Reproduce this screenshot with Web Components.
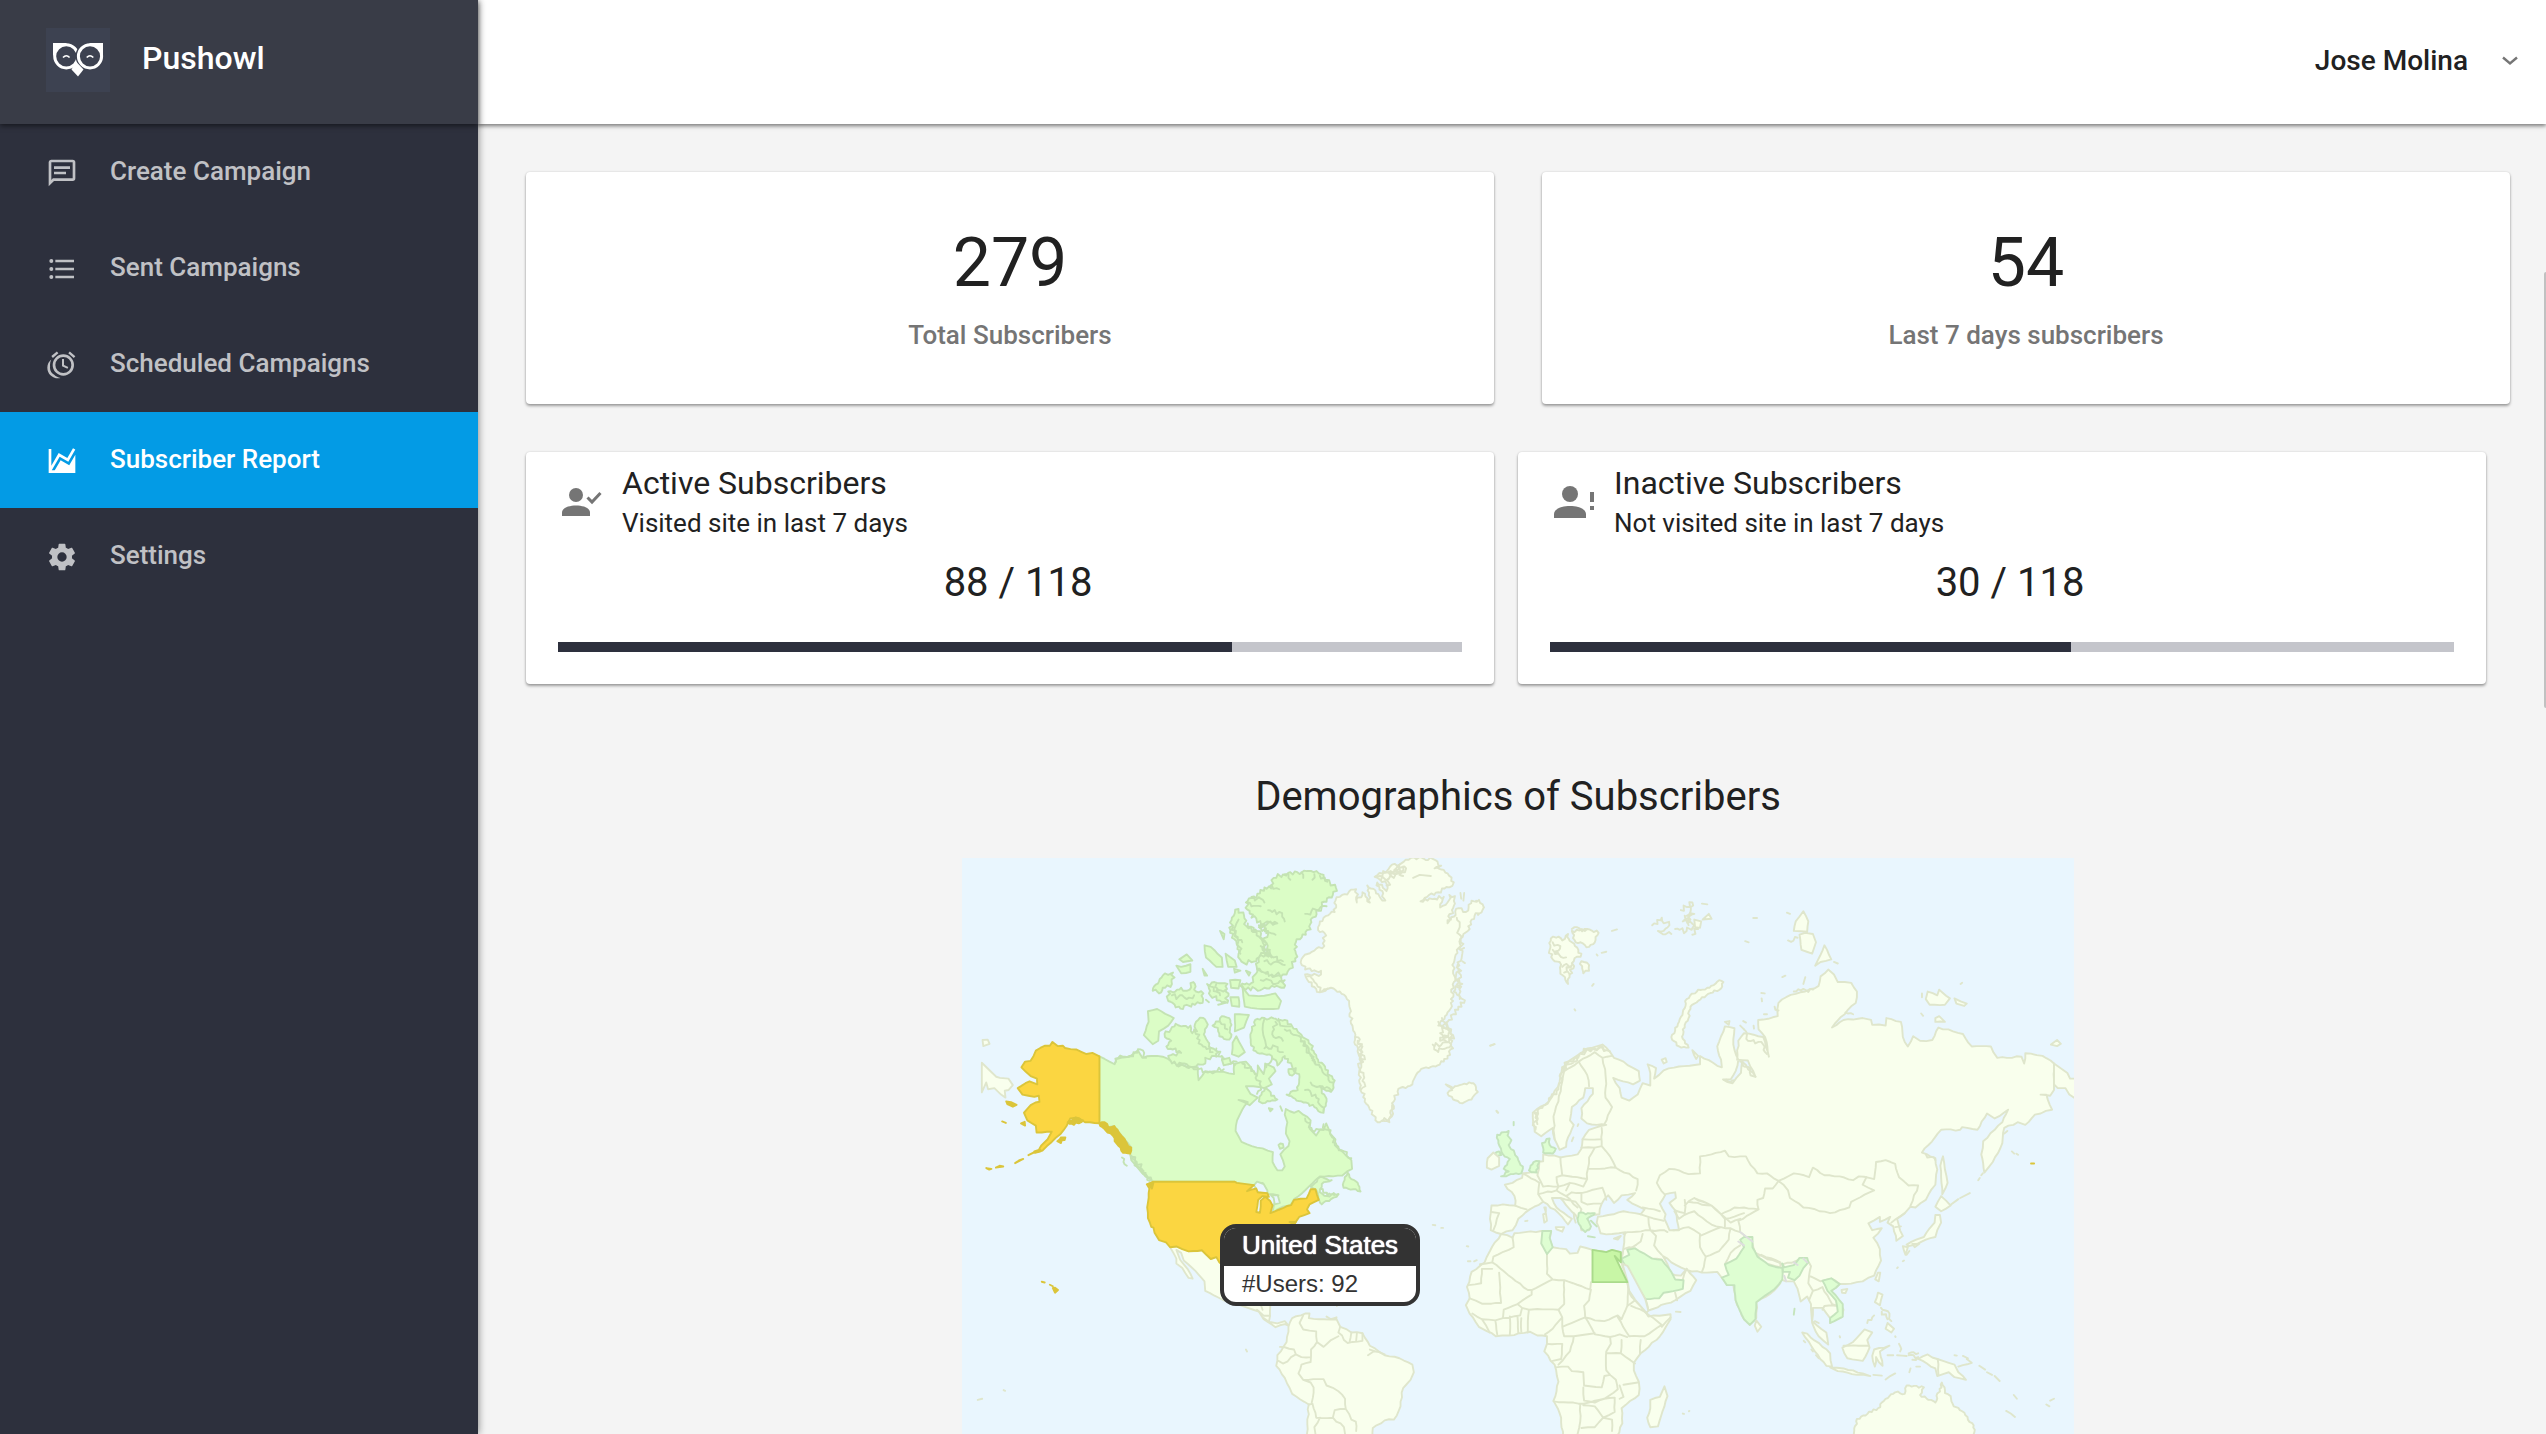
<!DOCTYPE html>
<html lang="en">
<head>
<meta charset="utf-8">
<title>Pushowl – Subscriber Report</title>
<style>
  body { margin: 0; font-family: Roboto, "Liberation Sans", sans-serif; color: #212121; background: #f4f4f4; }
</style>
</head>
<body>
<push-app>
  <push-sidebar slot="sidebar">
    <push-nav-item icon="message">Create Campaign</push-nav-item>
    <push-nav-item icon="list">Sent Campaigns</push-nav-item>
    <push-nav-item icon="alarm">Scheduled Campaigns</push-nav-item>
    <push-nav-item icon="chart" active>Subscriber Report</push-nav-item>
    <push-nav-item icon="gear">Settings</push-nav-item>
  </push-sidebar>
  <push-topbar slot="topbar">Jose Molina</push-topbar>
  <push-row>
    <push-stat value="279">Total Subscribers</push-stat>
    <push-stat value="54">Last 7 days subscribers</push-stat>
  </push-row>
  <push-row compact>
    <push-activity icon="user-check" heading="Active Subscribers" count="88 / 118" progress="746">Visited site in last 7 days</push-activity>
    <push-activity icon="user-alert" heading="Inactive Subscribers" count="30 / 118" progress="576">Not visited site in last 7 days</push-activity>
  </push-row>
  <push-demographics>Demographics of Subscribers</push-demographics>
</push-app>

<script>
const ICONS = {
  message: '<path d="M20,2A2,2 0 0,1 22,4V16A2,2 0 0,1 20,18H6L2,22V4C2,2.9 2.9,2 4,2H20M4,4V17.17L5.17,16H20V4H4M6,7H18V9H6V7M6,11H15V13H6V11Z"/>',
  list: '<path d="M7,5H21V7H7V5M7,13V11H21V13H7M4,4.5A1.5,1.5 0 0,1 5.5,6A1.5,1.5 0 0,1 4,7.5A1.5,1.5 0 0,1 2.5,6A1.5,1.5 0 0,1 4,4.5M4,10.5A1.5,1.5 0 0,1 5.5,12A1.5,1.5 0 0,1 4,13.5A1.5,1.5 0 0,1 2.5,12A1.5,1.5 0 0,1 4,10.5M7,19V17H21V19H7M4,16.5A1.5,1.5 0 0,1 5.5,18A1.5,1.5 0 0,1 4,19.5A1.5,1.5 0 0,1 2.5,18A1.5,1.5 0 0,1 4,16.5Z"/>',
  alarm: '<path d="M9.29,3.25L5.16,6.72L4,5.34L8.14,1.87L9.29,3.25M22,5.35L20.84,6.73L16.7,3.25L17.86,1.87L22,5.35M13,4A8,8 0 0,1 21,12A8,8 0 0,1 13,20A8,8 0 0,1 5,12A8,8 0 0,1 13,4M13,6A6,6 0 0,0 7,12A6,6 0 0,0 13,18A6,6 0 0,0 19,12A6,6 0 0,0 13,6M12,7.5H13.5V12.03L16.72,13.5L16.1,14.86L12,13V7.5M1,14C1,11.5 2.13,9.3 3.91,7.83C3.33,9.1 3,10.5 3,12L3.06,13.13L3,14C3,16.28 4.27,18.26 6.14,19.28C7.44,20.5 9.07,21.39 10.89,21.78C10.28,21.92 9.65,22 9,22A8,8 0 0,1 1,14Z"/>',
  chart: '<path d="M17.45,15.18L22,7.31V19L22,21H2V3H4V15.54L9.5,6L16,9.78L20.24,2.45L21.97,3.45L16.74,12.5L10.23,8.75L4.31,19H6.57L10.96,11.44L17.45,15.18Z"/>',
  gear: '<path d="M12,15.5A3.5,3.5 0 0,1 8.5,12A3.5,3.5 0 0,1 12,8.5A3.5,3.5 0 0,1 15.5,12A3.5,3.5 0 0,1 12,15.5M19.43,12.97C19.47,12.65 19.5,12.33 19.5,12C19.5,11.67 19.47,11.34 19.43,11L21.54,9.37C21.73,9.22 21.78,8.95 21.66,8.73L19.66,5.27C19.54,5.05 19.27,4.96 19.05,5.05L16.56,6.05C16.04,5.66 15.5,5.32 14.87,5.07L14.5,2.42C14.46,2.18 14.25,2 14,2H10C9.75,2 9.54,2.18 9.5,2.42L9.13,5.07C8.5,5.32 7.96,5.66 7.44,6.05L4.95,5.05C4.73,4.96 4.46,5.05 4.34,5.27L2.34,8.73C2.21,8.95 2.27,9.22 2.46,9.37L4.57,11C4.53,11.34 4.5,11.67 4.5,12C4.5,12.33 4.53,12.65 4.57,12.97L2.46,14.63C2.27,14.78 2.21,15.05 2.34,15.27L4.34,18.73C4.46,18.95 4.73,19.03 4.95,18.95L7.44,17.94C7.96,18.34 8.5,18.68 9.13,18.93L9.5,21.58C9.54,21.82 9.75,22 10,22H14C14.25,22 14.46,21.82 14.5,21.58L14.87,18.93C15.5,18.67 16.04,18.34 16.56,17.94L19.05,18.95C19.27,19.03 19.54,18.95 19.66,18.73L21.66,15.27C21.78,15.05 21.73,14.78 21.54,14.63L19.43,12.97Z"/>',
  'user-check': '<circle cx="14" cy="11" r="7"/><path d="M0 32v-3.5c0-4.7 7-7 14-7s14 2.3 14 7V32z"/><path d="M25.5 13.5l4.5 4.5 8.5-9" fill="none" stroke="currentColor" stroke-width="3"/>',
  'user-alert': '<circle cx="16" cy="10" r="8"/><path d="M0 34v-4c0-5.3 8-8 16-8s16 2.7 16 8v4zM36 8h4v10h-4zM36 22h4v4h-4z"/>'
};

const define = (name, render) => customElements.define(name, class extends HTMLElement {
  connectedCallback() {
    if (this.shadowRoot) return;
    this.attachShadow({ mode: 'open' }).innerHTML = render(this);
  }
});

define('push-app', () => `
<style>
  :host { display: flex; height: 100vh; overflow: hidden; position: relative; }
  .page { flex: 1; min-width: 0; display: flex; flex-direction: column; }
  main { flex: 1; min-height: 0; overflow: hidden; padding: 48px 36px 0 48px; display: flex; flex-direction: column; gap: 48px; }
  .thumb { position: absolute; right: 0; top: 19%; width: 2px; height: 436px; background: #c1c1c1; border-radius: 2px 0 0 2px; }
</style>
<slot name="sidebar"></slot>
<div class="page"><slot name="topbar"></slot><main><slot></slot></main></div>
<div class="thumb"></div>`);

define('push-sidebar', () => `
<style>
  :host { display: block; width: 478px; flex: none; background: #2d303d; box-shadow: 0 0 8px rgba(0,0,0,.5); position: relative; z-index: 2; }
  header { box-sizing: border-box; height: 124px; padding: 28px 46px 32px; display: flex; align-items: center; gap: 32px; background: #393c47; color: #fff; box-shadow: 0 2px 5px rgba(0,0,0,.5); position: relative; }
  h1 { margin: 0; padding-bottom: 4px; font-size: 32px; line-height: 40px; font-weight: 500; }
  svg { display: block; }
  nav { display: flex; flex-direction: column; }
</style>
<header>
  <svg width="64" height="64" viewBox="0 0 64 64" aria-hidden="true">
    <rect width="64" height="64" fill="#3d4251"/>
    <path d="M7 15H21L10 24L7 28ZM57 15H43L54 24L57 28Z" fill="#fff"/>
    <circle cx="20.3" cy="28.3" r="11.6" fill="#3d4251" stroke="#fff" stroke-width="3"/>
    <circle cx="44" cy="28.3" r="14.4" fill="#3d4251"/>
    <path d="M57 15H43L54 24L57 28Z" fill="#fff"/>
    <path d="M25.5 41.5l4.5-8 7.5 8L32 48.5z" fill="#fff"/>
    <circle cx="44" cy="28.3" r="11.6" fill="#3d4251" stroke="#fff" stroke-width="3"/>
    <path d="M17 29.5q3.3-3.5 6.6 0M40.7 29.5q3.3-3.5 6.6 0" fill="none" stroke="#fff" stroke-width="1.6"/>
  </svg>
  <h1>Pushowl</h1>
</header>
<nav><slot></slot></nav>`);

define('push-nav-item', el => `
<style>
  :host { display: block; }
  a { display: flex; align-items: center; gap: 32px; height: 96px; padding: 0 46px 2px; color: #c0c1c5; text-decoration: none; font-size: 26px; line-height: 32px; font-weight: 500; box-sizing: border-box; }
  :host([active]) a { background: #039be5; color: #fff; }
  svg { width: 32px; height: 32px; fill: currentColor; flex: none; margin-top: 4px; }
</style>
<a href="#"><svg viewBox="0 0 24 24" aria-hidden="true">${ICONS[el.getAttribute('icon')]}</svg><span><slot></slot></span></a>`);

define('push-topbar', () => `
<style>
  :host { box-sizing: border-box; display: flex; flex: none; height: 124px; align-items: center; justify-content: flex-end; padding: 0 28px 2px 28px; background: #fff; box-shadow: 0 2px 4px rgba(0,0,0,.5); position: relative; z-index: 1; }
  button { display: flex; align-items: center; gap: 34px; padding: 0; border: 0; background: none; color: #212121; font: 500 28px/36px Roboto, "Liberation Sans", sans-serif; }
</style>
<button type="button"><slot></slot><svg width="16" height="10" viewBox="0 0 16 10" fill="none" stroke="#757575" stroke-width="2.4" aria-hidden="true"><path d="M1 1.5l7 6 7-6"/></svg></button>`);

define('push-row', () => `
<style>
  :host { display: flex; gap: 48px; }
  :host([compact]) { gap: 24px; padding-right: 24px; }
  ::slotted(*) { flex: 1; }
</style><slot></slot>`);

const CARD = `background: #fff; border-radius: 4px; box-shadow: 0 2px 3px rgba(0,0,0,.35), 0 0 2px rgba(0,0,0,.15); box-sizing: border-box;`;

define('push-stat', el => `
<style>
  :host { display: flex; flex-direction: column; align-items: center; gap: 20px; padding: 55px 32px 53px; ${CARD} }
  .value { font-size: 68px; line-height: 72px; }
  .label { font-size: 26px; line-height: 32px; font-weight: 500; color: #757575; }
</style>
<div class="value">${el.getAttribute('value')}</div><div class="label"><slot></slot></div>`);

define('push-activity', el => `
<style>
  :host { display: block; padding: 11px 32px 32px; ${CARD} }
  header { display: flex; align-items: center; }
  svg { width: 60px; height: 34px; margin: 0 0 4px 4px; fill: currentColor; color: #757575; }
  h2 { margin: 0; font-size: 32px; line-height: 40px; font-weight: 400; }
  p { margin: 0; font-size: 26px; line-height: 40px; }
  .count { margin: 16px 0 35px; padding-left: 16px; text-align: center; font-size: 40px; line-height: 48px; }
  progress { display: block; width: 100%; height: 10px; appearance: none; border: 0; }
  progress::-webkit-progress-bar { background: #c4c5cb; }
  progress::-webkit-progress-value { background: #2d303d; }
</style>
<header><svg viewBox="0 0 60 34" aria-hidden="true">${ICONS[el.getAttribute('icon')]}</svg>
<div><h2>${el.getAttribute('heading')}</h2><p><slot></slot></p></div></header>
<div class="count">${el.getAttribute('count')}</div>
<progress max="1000" value="${el.getAttribute('progress')}" aria-label="${el.getAttribute('heading')}"></progress>`);

define('push-demographics', () => `
<style>
  :host { display: flex; flex-direction: column; align-items: center; gap: 37px; padding-top: 41px; }
  h2 { margin: 0; font-size: 40px; line-height: 48px; font-weight: 400; }
</style>
<h2><slot></slot></h2>
<push-map><map-tooltip label="United States">#Users: 92</map-tooltip></push-map>`);

define('map-tooltip', el => `
<style>
  :host { display: block; box-sizing: border-box; width: 200px; border: 4px solid #333; border-radius: 16px; background: #fff; overflow: hidden; color: #333; font-family: "Liberation Sans", sans-serif; }
  .head { background: #333; color: #fff; font-size: 26px; line-height: 30px; padding: 2px 18px 6px; text-shadow: 0 0 1px #fff, 0 0 1px #fff; white-space: nowrap; }
  .body { font-size: 24px; line-height: 28px; padding: 4px 18px; }
</style>
<div class="head">${el.getAttribute('label')}</div><div class="body"><slot></slot></div>`);

/* World geometry. Each entry: [class, coast roughness, point lists split by "/"]. A leading "-" on the class leaves the line open. */
const WEST = [
 ['land', 5, '1042 160 1060 145 1098 130 1100 165 1115 138 1135 165 1128 120 1177 160 1155 112 1180 135 1180 115 1148 97 1170 88 1190 70 1215 65 1240 52 1255 46 1305 50 1328 68 1310 75 1345 88 1362 112 1350 125 1320 138 1295 145 1272 162 1335 150 1325 178 1345 165 1350 145 1365 148 1360 180 1345 220 1375 180 1395 190 1410 160 1430 158 1443 178 1410 210 1405 235 1380 260 1375 285 1365 310 1360 345 1368 370 1355 395 1360 425 1345 455 1320 490 1350 505 1360 550 1335 585 1270 610 1250 645 1212 657 1200 690 1188 745 1150 740 1130 700 1108 655 1105 620 1115 580 1095 540 1088 490 1080 440 1065 408 1030 390 1000 402 970 375 960 355 1003 355 1003 345 960 342 950 315 985 292 1012 280 1012 245 995 238 1000 215 1040 190'],
 ['-land', 8, '1370 205 1378 250 1385 300 1375 350 1380 400 1390 430 1360 460 1345 480/1372 330 1366 370 1385 380 1362 400 1378 420/1180 120 1205 80 1230 85 1215 65 1190 95 1165 105/1185 85 1215 75 1225 95 1200 90/1330 470 1355 500 1325 530 1355 540 1320 560 1305 540/1320 480 1345 490 1325 510 1345 520/1095 520 1110 540 1120 570 1105 600 1120 640 1110 660/1102 530 1115 560 1108 590/1170 742 1188 735 1195 700/1150 97 1185 85 1200 100 1225 70/1310 545 1350 530 1360 515 1345 490/965 360 985 375 1000 400 1020 392'],
 ['-land', 0, '1380 140 1382 155/1390 140 1388 160/1460 543 1472 539/1478 716 1482 720/1305 1016 1312 1017/1328 1024 1333 1024/1397 1072 1401 1073/1400 1112 1407 1112/1417 1112 1424 1109/1045 1228 1046 1230/800 1345 803 1350/75 1478 87 1475/145 1452 149 1454/1252 100 1270 92 1300 95/1390 285 1380 290/1385 320 1392 325'],
 ['land', 3, '1340 645 1360 655 1385 645 1415 642 1427 665 1410 685 1385 695 1360 685 1345 668 1358 660'],
 ['land', 0, '86 588 125 625 135 628 158 630 170 647 158 660 148 662 150 680 138 672 120 655 103 658 98 640 86 666/88 528 102 527 107 538 90 544'],
 ['land', 1, '595 1075 612 1073 645 1086 681 1083 705 1106 720 1101 745 1130 760 1200 800 1215 840 1225 866 1228 865 1258 862 1272 885 1276 905 1270 915 1282 905 1278 880 1286 848 1265 835 1245 790 1230 740 1215 690 1190 688 1165 655 1130 632 1110 625 1090 612 1082 622 1108 642 1132 656 1158 645 1156 628 1130 612 1118 612 1105'],
 ['-land', 0, '830 1240 848 1256 865 1256/840 1226 845 1240/848 1262 862 1272/1018 1258 1030 1265 1045 1260 1042 1268'],
 ['land', 2, '915 1285 925 1262 960 1250 972 1250 970 1262 1010 1265 1045 1265 1055 1285 1085 1300 1115 1302 1135 1335 1175 1360 1215 1368 1250 1385 1254 1405 1245 1425 1225 1447 1218 1495 1200 1530 1175 1532 1143 1552 1143 1600 960 1600 965 1568 970 1490 925 1462 905 1420 882 1388 885 1360 910 1325'],
 ['-land', 2, '955 1255 945 1275 955 1292 990 1297 992 1325 976 1345 975 1378/892 1338 930 1345 935 1358 900 1382 888 1375/935 1358 950 1365 975 1365/975 1378 950 1385 942 1408 955 1425 1010 1423 1018 1440 1050 1455 1068 1475 1070 1502 1085 1530 1097 1535 1098 1560/955 1425 975 1432 983 1445 978 1485/970 1490 980 1488 990 1525 1035 1525 1040 1505 1070 1502/1055 1285 1050 1300 1075 1328 1115 1322 1115 1302/1085 1300 1080 1325/1100 1302 1098 1322/992 1325 1010 1338 1030 1320 1050 1310/1000 1525 985 1550 988 1568/1035 1525 1065 1550 1068 1568/1130 1360 1145 1350 1175 1358/1150 1350 1135 1345'],
 ['canada', 2, '404 571 445 592 450 578 485 572 508 556 520 575 545 570 575 572 612 590 640 598 670 600 672 634 690 610 740 612 768 618 768 592 800 585 812 598 830 622 832 595 838 605 848 618 852 590 875 600 880 610 862 630 870 645 850 655 820 650 800 650 812 670 832 680 810 700 780 686 805 692 790 712 776 740 772 768 788 797 830 812 873 824 872 850 885 872 898 872 905 862 900 845 893 830 915 808 918 795 908 775 912 745 905 725 908 710 930 720 942 715 955 725 975 740 972 762 990 780 1000 765 1010 765 1017 748 1028 775 1042 790 1040 805 1060 822 1068 830 1085 845 1087 868 1075 874 1060 886 1000 888 970 915 930 948 920 964 900 968 872 985 876 962 888 938 858 935 845 905 822 911 775 905 770 902 550 902 520 880 505 862 490 845 487 828 490 812 456 771 444 755 428 758 404 748'],
 ['-canada', 7, '445 590 455 575 485 570 508 552 530 575/488 832 505 850 520 870 545 898/490 840 515 872 540 900/465 838 478 860/612 590 640 600 672 605 690 612 740 605/720 550 735 580 760 590 775 585/735 570 755 590 770 595/790 590 830 620 840 650 830 670/855 600 870 580 860 560/1010 750 1030 780 1050 810 1085 840/1000 920 1020 940 1050 935/960 735 985 770 1010 765'],
 ['canada', 3, '975 915 1000 890 1032 898 1005 908 1000 930 1020 940 1050 935 1030 948 1005 962 998 950 988 922/1062 910 1075 878 1085 895 1102 905 1110 928 1090 922 1064 918/888 805 900 802 902 812 892 815'],
 ['sea', 0, '822 911 830 902 848 908 858 925 858 934 832 930/868 938 886 938 892 958 878 962 875 945'],
 ['canada', 1, '535 452 560 446 605 470 590 490 565 505 563 530 548 539 524 515 537 480'],
 ['canada', 6, '580 512 610 485 625 492 650 490 655 510 668 505 665 480 685 470 693 480 690 520 700 545 725 560 720 572 690 575 690 590 665 598 640 592 600 590 590 570 625 562 585 545 598 530/548 398 575 358 603 350 600 380 575 390 565 405/590 400 625 390 640 398 658 375 665 400 685 405 683 430 655 432 630 446 590 425/695 380 735 378 750 380 750 430 735 428 700 405/710 490 735 465 755 470 760 520 740 525 725 505/785 385 820 375 830 340 862 352 905 370 903 390 850 390 800 395'],
 ['canada', 1, '620 315 640 302 655 318 630 322/612 332 625 335 650 328 650 348 625 352/688 278 705 282 735 310 737 335 720 335 692 310/745 300 770 318 775 335 752 335/730 240 742 248 740 262/683 340 695 358 688 358/758 415 780 415 782 440 762 438/757 370 785 370 780 392 760 390/790 385 808 410 835 412 880 405 895 425 888 445 830 445 797 440/770 460 808 462 795 495 770 505/774 518 797 560 780 572 762 565 764 535/735 580 755 575 760 590 740 595/800 345 812 350 808 358/768 340 785 345 770 350/692 422 700 428/725 435 745 430/862 708 872 710 866 716/893 703 898 715'],
 ['canada', 7, '780 182 795 200 802 228 830 240 850 265 845 290 865 300 835 310 828 320 795 325 780 300 775 275 757 245 762 205/800 165 850 125 868 128 875 100 920 85 970 82 1010 92 1043 125 1035 145 1005 165 980 205 962 250 935 270 935 300 918 340 900 355 870 355 830 340 835 310 865 290 845 265 860 240 835 225 885 220 850 220 815 205'],
 ['-canada', 7, '805 165 840 175/860 185 890 190 905 215/815 150 850 165/870 120 890 130/905 90 920 105/950 85 955 100/985 90 980 105/1000 95 1020 110/1018 175 960 195/835 230 880 250/805 220 840 260 865 300 900 320/840 280 870 310/850 320 905 330/840 370 880 380 900 375/825 480 835 520 855 550 885 560/870 480 880 510 910 530/930 540 960 580 985 610/905 500 950 540 990 590 1035 640/960 560 1000 610/780 210 770 240 790 270/765 230 785 300/960 610 980 650 1005 690/960 660 990 700/1000 640 1035 650/700 385 720 400 745 395/720 380 730 410/600 410 640 420 660 410/660 500 680 540 710 560/730 480 750 500'],
 ['canada', 4, '825 475 850 470 905 475 945 510 975 540 995 580 1040 635 1030 665 1000 650 1018 690 1010 720 985 705 950 690 910 672 940 660 945 625 905 570 885 595 870 570 850 565 820 555 812 520/835 690 850 655 885 685 865 690 845 695/915 605 935 602 930 618 918 620'],
 ['-canada', 6, '905 500 935 515 960 540 985 580 1005 605 1035 640/950 530 975 570 1000 600/850 550 880 545 900 560/960 660 990 680 1010 715/975 640 1000 650 1030 660/880 480 875 520 900 530'],
 ['-canada', 2, '850 472 845 500 855 545/888 472 893 490 920 492'],
 ['us', 1, '404 571 404 748 365 745 350 735 325 735 315 755 298 777 275 797 250 820 234 824 228 822 240 818 247 806 264 790 275 770 262 770 234 772 232 754 209 740 200 720 218 700 231 693 242 691 240 675 228 678 196 672 183 655 215 637 236 645 235 630 218 623 193 600 203 585 218 583 232 556 257 543 270 543 277 533 291 544 305 543 311 549 341 553 369 565 385 562'],
 ['usd', 3, '404 748 418 745 428 758 444 755 456 771 468 785 478 800 490 812 487 828 468 826 461 812 445 795 440 780 426 772 412 758/290 795 300 785 312 785 300 800/318 745 340 732 360 740 335 752'],
 ['usd', 0, '152 690 165 692 180 699 170 704 155 697/192 748 202 744 203 754/278 1183 284 1182 292 1188 284 1195/141 743 151 747/270 1174 278 1178/248 1166 256 1168/228 824 212 832 225 826/245 822 230 826 245 818/198 842 176 853 188 845/144 862 124 865 134 860/112 868 98 866 106 870'],
 ['us', 1, '532 909 550 902 770 902 775 905 822 911 803 927 828 920 832 930 858 932 862 942 845 940 833 950 828 982 838 984 840 952 852 942 865 952 872 965 866 985 900 972 912 966 922 964 930 950 964 946 975 922 988 922 997 950 972 962 965 975 972 985 944 995 932 1012 900 1060 870 1080 880 1120 840 1100 790 1090 760 1110 745 1130 728 1115 720 1101 705 1106 681 1083 645 1086 612 1073 595 1075 584 1062 565 1056 553 1037 550 1023 544 1021 535 998 533 970 539 920'],
 ['usd', 2, '536 908 550 905 546 920/918 1008 935 1008 930 1015']
];
const EAST = [
 ['land', 2, '55 1040 85 1050 90 1038 160 1032 186 1032 182 1055 190 1075 225 1080 235 1092 255 1090 262 1073 294 1082 330 1088 345 1082 368 1088 372 1125 385 1167 390 1195 405 1215 435 1250 440 1258 498 1252 498 1265 470 1310 420 1355 402 1380 402 1400 415 1430 415 1465 370 1500 372 1540 350 1600 218 1600 212 1525 192 1480 205 1430 195 1385 168 1350 175 1330 175 1310 150 1308 130 1298 75 1308 41 1310 -3 1285 -27 1250 -37 1228 -27 1210 -34 1180 -22 1140 12 1115 26 1085'],
 ['-land', 1, '85 1050 88 1075 35 1100 32 1115 0 1120/32 1115 125 1188 135 1188 190 1160 175 1145 175 1093/50 1142 55 1222 5 1224 -27 1210/32 1132 5 1132 3 1170 -30 1175/190 1160 220 1162 288 1187 290 1167/220 1162 220 1225 205 1240 150 1238 128 1240 110 1235 98 1225 135 1200 135 1188/98 1225 62 1240 60 1262/128 1240 125 1270 125 1300/205 1240 215 1260 190 1290 170 1305/290 1187 285 1215 272 1230 275 1260 215 1285 215 1262/385 1167 388 1180 385 1230 370 1265 360 1255 325 1270 300 1268 275 1260/405 1215 385 1230/395 1230 430 1245 475 1280 430 1310 390 1310 360 1260/420 1320 418 1355/498 1260 475 1285/275 1260 300 1305 340 1312 365 1305 385 1312/215 1285 220 1310 245 1310 300 1302/245 1310 235 1350 205 1385/175 1330 215 1330 212 1370 190 1375/340 1312 342 1330 330 1350 330 1400 340 1412 325 1415 318 1445 272 1440 270 1405 240 1402 230 1390 198 1392/330 1355 368 1355 405 1382/368 1355 370 1320/340 1412 355 1425 360 1450 325 1475 300 1485 272 1480 270 1445/375 1438 412 1432/192 1482 270 1488 325 1475 352 1472 352 1510 322 1525 300 1495 270 1492/262 1490 262 1535 255 1568/322 1525 300 1550 265 1552/322 1525 345 1530 345 1560/365 1440 375 1470 365 1475/60 1262 40 1268 5 1265 -20 1250/40 1268 45 1305/78 1258 78 1305/98 1258 100 1300/62 1262 105 1255 110 1235/108 1262 108 1298/5 1265 15 1280 25 1300'],
 ['land', 1, '482 1442 490 1468 465 1548 445 1550 437 1525 445 1500 445 1478 470 1470'],
 ['land', 2, '30 965 60 962 92 965 90 940 65 910 85 905 110 892 112 880 130 878 130 868 145 850 165 848 165 830 210 838 255 830 265 815 268 790 285 765 330 752 280 748 265 735 265 708 295 670 295 655 275 655 270 680 240 705 235 740 245 752 230 785 225 810 208 818 195 790 190 760 160 782 143 770 138 720 180 690 205 650 215 600 245 575 280 550 320 540 340 560 350 575 375 585 415 610 418 635 400 645 348 628 365 655 370 680 390 688 412 672 425 642 445 648 445 615 438 592 460 602 455 630 480 608 520 598 575 592 575 570 632 600 630 580 620 545 640 492 665 497 662 540 675 580 668 610 655 632 635 632 660 642 682 615 685 585 720 625 700 582 672 580 675 530 690 510 740 520 755 572 745 520 728 500 727 475 778 465 780 430 800 415 850 400 885 385 890 360 910 342 925 355 935 375 970 377 985 400 982 430 960 450 920 495 950 475 1000 470 1022 475 1025 488 1060 490 1062 470 1100 480 1105 520 1118 545 1132 518 1150 530 1182 528 1198 495 1262 512 1285 545 1335 545 1352 575 1415 572 1422 590 1425 563 1470 570 1500 590 1500 660 1490 675 1465 672 1480 672 1495 712 1450 725 1425 752 1405 745 1370 760 1365 800 1340 850 1318 878 1310 830 1315 795 1365 745 1380 712 1345 735 1325 722 1300 765 1260 758 1255 765 1205 765 1155 825 1190 840 1195 870 1190 910 1165 950 1138 970 1125 968 1110 985 1090 1000 1105 1045 1088 1058 1080 1020 1065 1010 1072 995 1045 1008 1045 995 1015 1012 1025 1030 1050 1025 1028 1050 1045 1080 1048 1110 1030 1150 1000 1165 955 1172 940 1172 918 1190 950 1240 945 1260 915 1275 915 1262 895 1235 870 1235 868 1270 905 1300 910 1332 885 1310 868 1275 865 1225 855 1205 838 1218 830 1185 820 1165 800 1165 785 1160 785 1170 768 1190 722 1220 722 1262 705 1280 690 1265 668 1215 662 1175 640 1165 620 1140 580 1142 540 1135 500 1115 478 1098 490 1120 500 1145 525 1150 540 1132 565 1162 550 1190 510 1215 440 1242 432 1210 400 1165 368 1110 375 1075 380 1035 345 1040 315 1038 305 1010 308 995 335 990 375 980 420 988 430 975 410 965 385 950 405 932 370 938 350 958 335 938 318 960 312 988 278 988 285 1030 265 1030 250 990 210 945 188 945 200 970 240 1000 230 1015 205 985 165 955 130 975 100 1000 85 1030 55 1040 28 1030 28 985'],
 ['sea', 1, '470 960 485 935 510 930 512 945 495 958 512 980 520 1030 495 1030 482 1000 485 988'],
 ['-land', 7, '145 765 142 720 180 690 205 650 218 605 245 580 280 552 320 545 340 558/150 750 150 715/215 600 260 570/265 565 300 550 330 555/690 500 700 530 740 540 750 565/820 400 870 395/955 455 975 460/770 440 780 450/1165 830 1190 845/680 585 720 625/638 634 662 634'],
 ['-land', 2, '195 790 192 730 205 690 220 610 258 585 280 620 285 650/258 585 300 560 320 575 345 570/320 575 328 620 328 680 345 705 325 750/318 760 318 808 340 835 355 865 412 895 408 925/268 790 315 790/265 812 300 812 318 808/210 838 215 885 280 895 282 868 285 838 300 812/285 868 355 865/155 850 150 885 165 915 205 915 200 890 215 885/112 880 155 905 152 935 165 955/92 965 122 975/50 985 35 1030/30 982 50 985/152 935 200 925 205 915 235 905 270 915 280 895/200 925 225 940 240 930 265 932 320 918 330 950/235 905 225 925/265 932 265 955 280 962 315 960/210 945 250 955 265 975 260 990/225 940 255 970/245 985 250 1010/375 1040 385 1035 445 1030 440 995 420 988/440 995 480 1005/425 970 470 980/445 1030 460 1045 455 1070 475 1095/385 1080 420 1060 425 1040/405 1078 390 1075 375 1080/450 1105 475 1108/445 1030 482 1030 490 1035/505 1030 545 1022 575 1040 575 1075 590 1100 580 1140/575 1045 630 1022 655 1025 650 1055 625 1085 590 1100/655 1025 680 1035/640 1120 655 1090 680 1070/508 980 520 1000 545 985 560 980 605 1015 630 1022/510 978 535 985 535 950/560 945 535 965/605 965 560 945/545 955 605 965 630 988 640 1000 690 985/630 988 655 1010 680 1000/640 1020 640 1000/482 935 462 905 470 885 495 868 520 872 545 882 575 880 575 835 605 830 640 820 650 835 695 835 725 880 750 880 780 900 765 920 745 920 740 945 725 950 728 975 690 970 665 970 630 988 605 965 560 945/780 900 820 880 860 890 870 865 900 885 940 888 975 898 990 888 1030 895 1035 850 1060 845 1085 855 1095 890 1120 912 1145 912 1125 965/780 900 805 925 810 945 845 970 915 985 965 970 970 955 1030 925 1000 910 1010 890/728 975 675 1005 680 1035 712 1065 720 1090 740 1100 790 1120 850 1105 865 1125 860 1150 890 1165 918 1158 940 1172/725 1100 735 1095 785 1115 785 1128 755 1120/860 1150 858 1170 870 1190 860 1215/870 1190 895 1180 920 1225 935 1230/895 1240 900 1230 935 1230/510 1195 515 1215/530 1160 540 1132/875 1270 885 1275/1110 985 1075 1010/1085 1022 1100 1020/432 1212 480 1195'],
 ['saudi', 1, '370 1105 390 1095 385 1082 405 1078 450 1105 475 1108 500 1140 510 1160 532 1162 530 1185 480 1195 468 1210 432 1212 400 1160/680 1055 690 1048 712 1048 712 1075 725 1100 755 1122 790 1130 790 1160 770 1185 722 1220 720 1265 705 1280 690 1265 668 1215 665 1175 645 1175 632 1155 650 1148 640 1120 670 1105 690 1075/790 1118 795 1128 820 1122 835 1103 855 1103 858 1115 845 1130 835 1150 822 1162 805 1155 810 1140 792 1140/895 1163 918 1157 940 1172 918 1190 948 1225 948 1258 915 1275 915 1262 935 1245 930 1215 908 1190'],
 ['-grey', 0, '680 1035 712 1060/675 1060 690 1070/795 1150 800 1165/845 1105 855 1115/820 1115 830 1122'],
 ['-saudi', 0, '822 1237 820 1253'],
 ['saudi', 3, '45 778 75 768 72 780 82 792 75 805 90 825 100 845 112 862 108 880 80 882 55 888 75 875 62 868 72 850 78 842 60 830 55 815 48 800/38 830 50 822 55 832 42 838/162 800 182 788 182 805 198 815 190 828 165 825/258 985 300 985 280 1000 290 1020 275 1035 265 1025 255 1000/128 872 140 850 155 848 148 878'],
 ['-saudi', 0, '88 744 88 753/282 1046 300 1049/290 1005 305 1020'],
 ['saudi', 0, '163 1032 186 1032 182 1050 190 1075 175 1093 160 1065'],
 ['land', 2, '20 840 35 825 50 838 50 860 30 870 18 865'],
 ['sea', 0, '372 1118 386 1125 432 1212 440 1242 435 1248 405 1213 390 1190 386 1167'],
 ['egypt', 0, '294 1082 330 1088 345 1082 368 1088 368 1115 352 1098 385 1167 294 1167'],
 ['land', 1, '165 988 172 985 175 1005 168 1010/168 970 172 970 172 982/198 1022 220 1022 215 1034 200 1028/350 1052 368 1045 360 1055/722 1268 735 1285 725 1298 718 1282/945 1188 960 1185 955 1196 946 1195/1040 1142 1046 1142 1042 1165 1033 1160/1115 1068 1140 1055 1160 1048 1175 1025 1188 1010 1190 990 1202 990 1205 1010 1195 1030 1190 1048 1165 1055 1145 1065 1120 1072/1105 1072 1118 1075 1112 1095/1130 1066 1148 1066 1136 1075/1190 968 1205 940 1230 965 1205 980/1210 835 1215 870 1222 905 1208 935 1205 890 1203 860'],
 ['-land', 0, '1230 963 1250 948/1255 945 1280 932/1302 898 1306 892/1310 885 1314 880/1090 1130 1092 1128/1105 1112 1108 1110/1115 1095 1122 1085/118 1006 124 1005/512 1245 524 1246/530 1514 533 1515/546 1508 547 1507/28 543 38 539/43 715 46 719/240 795 244 785/255 755 257 750'],
 ['land', 3, '500 520 520 480 530 455 540 420 570 395 600 390 625 370 636 375 630 392 580 415 550 440 545 470 530 500 530 525 545 548 520 545'],
 ['land', 5, '185 260 205 255 215 265 230 248 240 270 265 300 245 320 230 380 210 345 208 322 190 315 182 290/240 240 280 235 310 245 300 270 285 282 250 270/265 320 285 330 285 345 270 352'],
 ['-land', 7, '190 270 210 280 195 300 225 310/190 290 205 300/215 335 240 330 220 350 235 355/240 235 280 235/450 225 475 205 495 225 465 240 500 248/525 185 555 165 540 200 560 195 530 215 560 225 540 240 510 235/535 200 550 210 545 225/555 250 570 235/805 265 830 258'],
 ['land', 1, '845 188 858 215 855 242 820 240 825 215/835 250 850 245 870 248 878 270 868 300 840 290/900 278 918 315 890 322 876 332/1170 400 1195 410 1200 395 1228 418 1215 435 1175 435 1165 420/1240 418 1272 432 1265 438 1245 432/1190 470 1200 465 1215 480 1190 480/1492 540 1508 528 1518 538 1508 544/475 580 485 576 488 586 480 590/555 555 570 570 565 578/640 480 652 478 650 488/560 210 578 215 575 232 562 230/582 210 598 195 605 208/-10 160 10 178 -5 198'],
 ['-land', 0, '345 240 358 236/318 298 330 295/305 302 307 305/293 385 297 380/247 447 249 450/580 168 594 170/714 206 724 206/693 267 702 270/802 192 810 195/925 322 935 326/790 362 798 358/735 404 744 405/736 418 737 426/742 460 750 460/845 380 850 362/1155 405 1155 415/1153 458 1158 464/1256 380 1260 377/688 478 695 482/715 490 716 498/1390 822 1396 828/1402 828 1406 831/1370 775 1378 768/680 490 690 500'],
 ['land', 0, '1500 590 1535 615 1542 630 1560 630 1560 685 1540 672 1530 655 1510 655 1500 645'],
 ['-usd', 0, '1440 854 1448 854'],
 ['land', 2, '842 1300 855 1303 915 1355 920 1390 905 1388 875 1350/947 1340 975 1325 1005 1292 1025 1300 1012 1320 1018 1340 1000 1375 960 1368/915 1392 950 1395 1000 1408 1020 1415 985 1412 935 1402/1030 1345 1070 1335 1045 1350 1052 1388 1035 1365 1032 1390 1025 1362/1145 1370 1170 1358 1195 1370 1240 1385 1250 1405 1270 1425 1240 1418 1225 1405 1195 1415 1190 1395/1040 1195 1052 1200 1045 1228 1032 1220/1065 1275 1082 1290 1075 1300 1060 1290'],
 ['-land', 5, '1120 1360 1145 1365 1130 1372/1048 1235 1070 1250 1075 1270/1012 1275 1030 1255/1050 1245 1065 1265/1095 1330 1098 1350/1120 1355 1145 1355'],
 ['-land', 1, '1196 1370 1198 1412/950 1335 1015 1335/1250 1390 1285 1380 1272 1370/1305 1388 1320 1398/1325 1405 1338 1412/1345 1415 1358 1428/1028 1412 1050 1414/1060 1424 1085 1408/1090 1360 1115 1362/1065 1360 1080 1360/1122 1405 1125 1395/1395 1465 1403 1475/1375 1507 1398 1523/1480 1490 1488 1495/1490 1480 1500 1475/1240 1360 1246 1361/1262 1362 1275 1368/846 1322 850 1326/866 1345 870 1350/878 1360 885 1368/940 1310 941 1313/1085 1310 1086 1312/1140 1390 1150 1390'],
 ['land', 3, '985 1600 978 1560 985 1528 1040 1500 1060 1475 1085 1458 1110 1462 1115 1440 1160 1445 1150 1465 1190 1485 1207 1432 1215 1460 1230 1468 1238 1495 1260 1508 1275 1530 1290 1545 1292 1600']
];

let seed = 11;
const rand = () => (seed = (seed * 16807) % 2147483647) / 2147483647 - .5;
function outline(list, rough, open) {
  const n = list.trim().split(/\s+/).map(Number), pts = [];
  for (let i = 0; i < n.length; i += 2) pts.push([n[i], n[i + 1]]);
  const out = [], last = open ? pts.length - 1 : pts.length, step = rough > 2 ? 6 : 12;
  for (let i = 0; i < last; i++) {
    const a = pts[i], b = pts[(i + 1) % pts.length];
    out.push(a);
    const len = Math.hypot(b[0] - a[0], b[1] - a[1]), k = rough ? Math.floor(len / step) : 0;
    if (len > 130) continue;
    for (let j = 1; j < k; j++) {
      const t = j / k, d = rand() * 2 * rough;
      out.push([a[0] + (b[0] - a[0]) * t - (b[1] - a[1]) / len * d, a[1] + (b[1] - a[1]) * t + (b[0] - a[0]) / len * d]);
    }
  }
  if (open) out.push(pts[last]);
  return 'M' + out.map(p => p.map(v => Math.round(v)).join(' ')).join('L') + (open ? '' : 'Z');
}
const shapes = set => set.map(([c, r, lists]) => {
  const open = c[0] === '-';
  return `<path class="${open ? 'line ' + c.slice(1) : c}" d="${lists.split('/').map(l => outline(l, r, open)).join('')}"/>`;
}).join('');

define('push-map', () => `
<style>
  :host { display: block; position: relative; width: 1112px; max-width: 100%; }
  svg { display: block; width: 100%; background: #e9f6fe; }
  path { stroke-width: 5; stroke-linejoin: round; stroke-linecap: round; }
  .land { fill: #f9ffed; stroke: #dfe6cc; }
  .canada { fill: #dbfdc6; stroke: #c4e3b3; }
  .us { fill: #fbd641; stroke: #dbc53a; }
  .usd { fill: #dbc53a; stroke: #dbc53a; }
  .saudi { fill: #defed2; stroke: #c5e4bd; }
  .egypt { fill: #c8f6a6; stroke: #aadb8b; }
  .sea { fill: #e9f6fe; stroke: #dfe6cc; }
  .west .sea { stroke: #c4e3b3; }
  .grey { stroke: #dedede; }
  .line { fill: none; }
  .tip { position: absolute; left: 258px; top: 366px; }
</style>
<svg viewBox="0 0 1112 700" role="img" aria-label="World map of subscribers">
  <g class="east" transform="translate(518 -18) scale(.38266 .37883)">${shapes(EAST)}</g>
  <g class="west" transform="translate(-12 -18) scale(.3699 .37883)">${shapes(WEST)}</g>
</svg>
<div class="tip"><slot></slot></div>`);
</script>
</body>
</html>
